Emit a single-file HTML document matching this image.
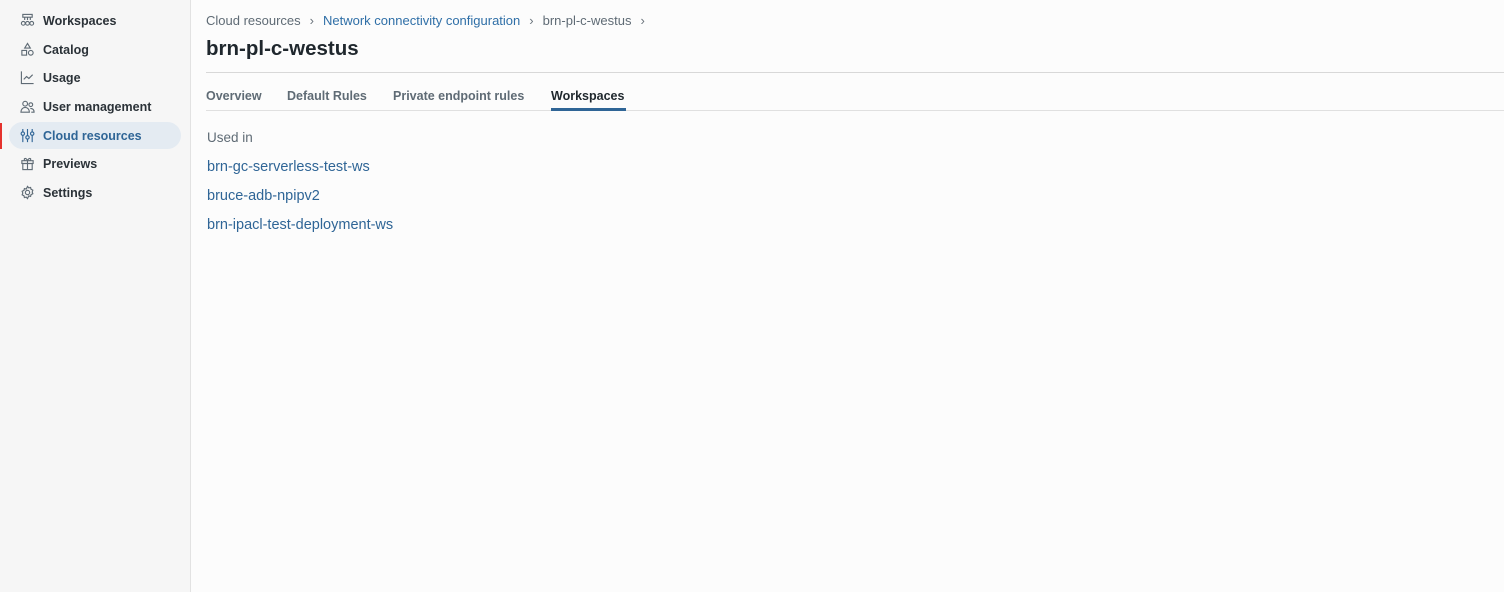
<!DOCTYPE html>
<html><head><meta charset="utf-8"><style>
*{margin:0;padding:0;box-sizing:border-box}
body{width:1504px;height:592px;background:#fcfcfc;font-family:"Liberation Sans",sans-serif;position:relative;overflow:hidden;color:#1f272d}
.side{position:absolute;left:0;top:0;width:191px;height:592px;background:#f6f6f6;border-right:1px solid #e2e2e2}
.item{position:absolute;left:9px;width:172px;height:27px;border-radius:14px;display:flex;align-items:center;padding-left:11px;font-size:12.5px;font-weight:bold;color:#2b3238}
.item svg{width:15px;height:15px;margin-right:8px;stroke:#5f6b75;fill:none;stroke-width:1.2}
.item.act{background:#e4ebf2;color:#2f6596}
.item.act svg{stroke:#2f6596}
.bar{position:absolute;left:0;top:123px;width:2px;height:26px;background:#e5322d}
.main{position:absolute;left:206px;top:0;right:0}
.crumb{position:absolute;top:13px;font-size:13px;color:#5f6b75;white-space:nowrap}
.crumb a{color:#2f6fa7}
.crumb .s{margin:0 9px;color:#6b747c}
h1{position:absolute;top:37px;font-size:20.5px;font-weight:bold;color:#1f272d}
.hr1{position:absolute;top:72px;left:0;right:0;height:1px;background:#d8d8d8}
.tabs{position:absolute;top:89px;font-size:12.5px;font-weight:bold;color:#5f6b75;white-space:nowrap}
.tabs span{position:absolute}
.hr2{position:absolute;top:110px;left:0;right:0;height:1px;background:#e0e0e0}
.ul{position:absolute;top:108px;left:345px;width:75px;height:3px;background:#2f6596}
.c{position:absolute;left:1px;font-size:14.5px}
</style></head><body>
<div class="side">
<div class="item" style="top:7px"><svg viewBox="0 0 16 16"><rect x="3" y="1.5" width="10" height="3"/><path d="M5 4.5v3M11 4.5v3M8 4.5v3"/><circle cx="3.5" cy="11" r="2"/><circle cx="8" cy="11" r="2"/><circle cx="12.5" cy="11" r="2"/></svg>Workspaces</div>
<div class="item" style="top:36px"><svg viewBox="0 0 16 16"><path d="M8 1.5L11 6.5H5Z"/><rect x="2" y="9" width="5" height="5"/><circle cx="11.5" cy="11.5" r="2.5"/></svg>Catalog</div>
<div class="item" style="top:64px"><svg viewBox="0 0 16 16"><path d="M1.5 1.5v13h13M4 10l3-3 2.5 2 4-4"/></svg>Usage</div>
<div class="item" style="top:93px"><svg viewBox="0 0 16 16"><circle cx="5.5" cy="5" r="2.5"/><path d="M1 14c0-3 2-5 4.5-5s4.5 2 4.5 5z"/><circle cx="11.5" cy="6" r="2"/><path d="M11 10c2 0 4 1 4 4h-3"/></svg>User management</div>
<div class="item act" style="top:122px"><svg viewBox="0 0 16 16"><path d="M3 1v3M3 8v7M8 1v7M8 12v3M13 1v3M13 8v7"/><circle cx="3" cy="6" r="1.8"/><circle cx="8" cy="10" r="1.8"/><circle cx="13" cy="6" r="1.8"/></svg>Cloud resources</div>
<div class="item" style="top:150px"><svg viewBox="0 0 16 16"><rect x="2" y="5" width="12" height="3"/><rect x="3" y="8" width="10" height="6.5"/><path d="M8 5v9.5M8 5C6 1 3 3 5.5 5M8 5c2-4 5-2 2.5 0"/></svg>Previews</div>
<div class="item" style="top:179px"><svg viewBox="0 0 16 16"><circle cx="8" cy="8" r="2.3"/><path d="M8 1.5l1.3 1.6 2-.5.5 2 1.9.9-.7 1.9.7 1.9-1.9.9-.5 2-2-.5L8 14.5l-1.3-1.6-2 .5-.5-2-1.9-.9.7-1.9-.7-1.9 1.9-.9.5-2 2 .5z"/></svg>Settings</div>
</div>
<div class="bar"></div>
<div class="main">
<div class="crumb">Cloud resources<span class="s">›</span><a>Network connectivity configuration</a><span class="s">›</span>brn-pl-c-westus<span class="s">›</span></div>
<h1>brn-pl-c-westus</h1>
<div class="hr1"></div>
<div class="tabs"><span style="left:0">Overview</span><span style="left:81px">Default Rules</span><span style="left:187px">Private endpoint rules</span><span style="left:345px;color:#1f272d">Workspaces</span></div>
<div class="hr2"></div><div class="ul"></div>
<div class="c" style="top:130px;color:#5f6b75;font-size:13.5px">Used in</div>
<div class="c" style="top:159px;color:#2f6596">brn-gc-serverless-test-ws</div>
<div class="c" style="top:188px;color:#2f6596">bruce-adb-npipv2</div>
<div class="c" style="top:217px;color:#2f6596">brn-ipacl-test-deployment-ws</div>
</div>
</body></html>
